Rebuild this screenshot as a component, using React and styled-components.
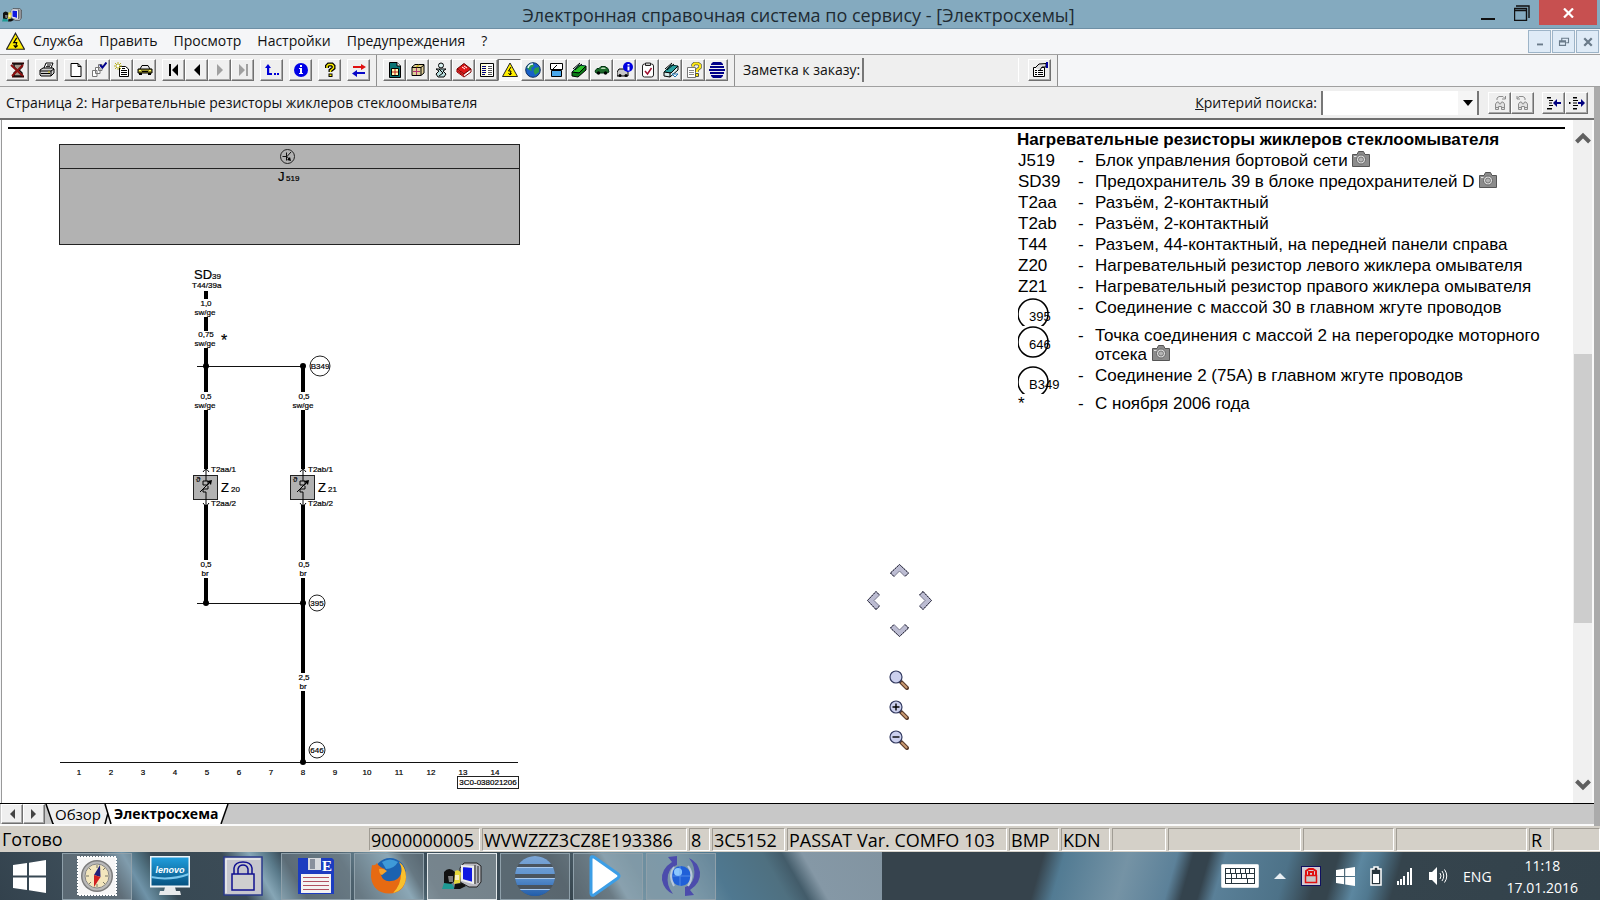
import React from 'react';
import styled, { createGlobalStyle, css } from 'styled-components';

const UI = '"Open Sans", "Noto Sans", sans-serif';
const DOC = '"Liberation Sans", Arial, sans-serif';

const Global = createGlobalStyle`
  * { box-sizing: border-box; }
  body { margin: 0; font-family: ${UI}; font-size: 14px; color: #111; }
  button, input { font: inherit; color: inherit; margin: 0; padding: 0; border-radius: 0; }
  svg { display: block; flex: none; }
`;

/* ---------- shell ---------- */
const Shell = styled.div`
  display: flex;
  flex-direction: column;
  min-height: 100vh;
  background: #f5f6f8;
`;

const TitleBar = styled.header`
  display: flex;
  align-items: flex-start;
  height: 29px;
  background: #84aabf;
  border-bottom: 1px solid #6d8fa5;
`;
const TitleIcon = styled.span`
  width: 24px;
  padding: 8px 0 0 2px;
`;
const TitleText = styled.h1`
  flex: 1;
  margin: 0;
  padding-left: 102px;
  font-size: 18px;
  font-weight: 400;
  line-height: 30px;
  text-align: center;
  color: #1e2b33;
  white-space: nowrap;
`;
const CaptionButton = styled.button`
  display: flex;
  align-items: center;
  justify-content: center;
  width: ${(p) => (p.$close ? 58 : 34)}px;
  height: 25px;
  margin-right: ${(p) => (p.$close ? 3 : 0)}px;
  border: 0;
  background: ${(p) => (p.$close ? '#c75050' : 'transparent')};
`;

const MenuBar = styled.nav`
  display: flex;
  align-items: center;
  height: 26px;
  padding-left: 6px;
  background: #f5f6f8;
  border-bottom: 1px solid #a0a0a0;
`;
const MenuItem = styled.button`
  padding: 0 8px 1px;
  border: 0;
  background: none;
  line-height: 24px;
`;
const MdiButtons = styled.div`
  display: flex;
  gap: 1px;
  margin-left: auto;
  padding-right: 1px;
`;
const MdiButton = styled.button`
  display: flex;
  align-items: center;
  justify-content: center;
  width: 23px;
  height: 23px;
  border: 1px solid #9db4c8;
  background: #dfebf7;
`;

/* ---------- tool bars ---------- */
const ToolRow = styled.div`
  display: flex;
  height: 32px;
  border-bottom: 1px solid #a0a0a0;
`;
const ToolSection = styled.div`
  display: flex;
  align-items: center;
  gap: 6px;
  padding: 0 6px 2px;
  background: #efefef;
  border-right: 1px solid #8f8f8f;
`;
const ButtonGroup = styled.div`
  display: flex;
`;
const raised = css`
  border: 1px solid;
  border-color: #fff #707070 #707070 #fff;
  box-shadow: inset -1px -1px 0 #a8a8a8;
`;
const sunken = css`
  border: 1px solid;
  border-color: #707070 #fff #fff #707070;
  background: #f8f8f8;
`;
const ToolButton = styled.button`
  display: flex;
  align-items: center;
  justify-content: center;
  width: 23px;
  height: 22px;
  background: #efefef;
  ${(p) => (p.$pressed ? sunken : raised)}
`;
const NoteLabel = styled.label`
  margin: 0 -4px 0 2px;
  white-space: nowrap;
`;
const NoteInput = styled.input`
  width: 157px;
  height: 24px;
  margin-right: 3px;
  border: 0;
  border-left: 2px solid #777;
  border-right: 1px solid #fff;
  background: transparent;
`;

const Workspace = styled.div`
  display: flex;
  flex: 1;
  flex-direction: column;
  border-right: 6px solid #ababab;
`;
const PageBar = styled.div`
  display: flex;
  align-items: center;
  height: 33px;
  padding: 0 6px;
  background: #efefef;
  border-bottom: 2px solid #707070;
`;
const PageTitle = styled.h2`
  flex: 1;
  margin: 0;
  font-size: 14px;
  font-weight: 400;
`;
const SearchBox = styled.div`
  display: flex;
  width: 158px;
  height: 24px;
  margin: 0 9px 0 4px;
  border-left: 2px solid #777;
  border-right: 2px solid #777;
`;
const SearchInput = styled.input`
  flex: 1;
  min-width: 0;
  border: 0;
  background: #fff;
`;
const SearchDrop = styled.button`
  display: flex;
  align-items: center;
  justify-content: center;
  width: 19px;
  border: 0;
  background: #f5f5f5;
`;
const SearchGroup = styled(ButtonGroup)`
  margin-left: ${(p) => (p.$spaced ? 8 : 0)}px;
`;

/* ---------- document ---------- */
const Document = styled.main`
  display: flex;
  flex: 1;
  margin-left: 1px;
  border-left: 1px solid #999;
  background: #fff;
`;
const Sheet = styled.div`
  display: flex;
  flex: 1;
  margin: 7px 8px 0 6px;
  border-top: 2px solid #000;
`;
const DiagramPane = styled.section`
  display: flex;
  flex: 1;
  justify-content: space-between;
  padding-right: 79px;
`;
const Controls = styled.div`
  padding-top: 426px;
`;
const PanPad = styled.div`
  display: grid;
  grid-template-columns: repeat(3, 26px);
  grid-template-rows: repeat(3, 30px);
  grid-template-areas: '. up .' 'left . right' '. down .';
`;
const ZoomStack = styled.div`
  display: grid;
  grid-auto-rows: 30px;
  justify-content: center;
  margin-top: 20px;
`;
const PlainButton = styled.button`
  display: flex;
  align-items: center;
  justify-content: center;
  grid-area: ${(p) => p.$area || 'auto'};
  border: 0;
  background: none;
`;
const LegendPane = styled.section`
  width: 548px;
  font-family: ${DOC};
  font-size: 17px;
  line-height: 20px;
  color: #000;
`;
const LegendTitle = styled.h3`
  margin: 0;
  font-size: 17px;
  line-height: 22px;
`;
const LegendTable = styled.table`
  border-collapse: collapse;
`;
const LegendRow = styled.tr`
  height: ${(p) => p.$height || 21}px;
  vertical-align: top;
`;
const Code = styled.th`
  width: 61px;
  padding: 0 0 0 1px;
  font-weight: 400;
  text-align: left;
`;
const Dash = styled.td`
  width: 17px;
  padding: 0;
`;
const Meaning = styled.td`
  padding: 0;
  line-height: ${(p) => (p.$wrap ? 19 : 20)}px;
  svg { display: inline-block; vertical-align: -1px; }
`;

const ScrollBar = styled.div`
  display: flex;
  flex-direction: column;
  width: 21px;
  background: #f0f0f0;
  border-right: 2px solid #fafafa;
`;
const ScrollButton = styled.button`
  display: flex;
  align-items: center;
  justify-content: center;
  height: 36px;
  border: 0;
  background: none;
`;
const ScrollTrack = styled.div`
  display: flex;
  flex: 1;
  flex-direction: column;
  padding-left: 1px;
`;
const ScrollGap = styled.div`
  flex: ${(p) => p.$share};
`;
const ScrollThumb = styled.div`
  flex: 269;
  background: #cdcdcd;
`;

/* ---------- sheet tabs ---------- */
const TabStrip = styled.div`
  display: flex;
  height: 23px;
  padding-left: 1px;
  background: #c8c8c8;
  border-top: 1px solid #000;
  border-bottom: 2px solid #fafafa;
`;
const TabArrow = styled.button`
  display: flex;
  align-items: center;
  justify-content: center;
  width: 22px;
  height: 20px;
  background: #efefef;
  ${raised}
`;
const SheetTab = styled.button`
  height: 20px;
  padding: 0 1px 1px;
  border: 0;
  background: ${(p) => (p.$active ? '#fff' : '#efefef')};
  color: #000;
  font-weight: ${(p) => (p.$active ? 700 : 400)};
  font-size: ${(p) => (p.$active ? 14 : 15)}px;
  line-height: 18px;
`;

/* ---------- status bar ---------- */
const StatusBar = styled.footer`
  display: flex;
  gap: 2px;
  height: 26px;
  padding: 2px 0 1px;
  background: #d4d0c8;
  font-size: 18px;
  line-height: 23px;
  color: #000;
  white-space: nowrap;
`;
const StatusText = styled.span`
  flex: 1;
  padding-left: 2px;
`;
const StatusField = styled.span`
  width: ${(p) => p.$width}px;
  padding-left: 1px;
  border: 1px solid;
  border-color: #a09c94 #fff #fff #a09c94;
  line-height: 22px;
`;

/* ---------- task bar ---------- */
const TaskBar = styled.div`
  display: flex;
  align-items: center;
  height: 48px;
  background:
    linear-gradient(
      60deg,
      #33424d 0, #3f505c 107px, #6f93a8 129px, #50707f 142px, #384954 155px,
      #3b4b56 215px, #86a6b6 239px, #5a7a8a 254px, #3c4e5a 267px, #4d616d 315px,
      #7fa3b5 358px, #4a5f6b 371px, #3c4e5a 384px, #37464f 497px, #50636e 532px,
      #7c9aaa 545px, #6f8f9f 566px, #6a8fa2 601px, #4f7890 635px, #4f7080 683px,
      #435c6a 700px, #8598a6 718px, #8294a1 786px
    ) left / 882px 100% no-repeat,
    linear-gradient(
      106deg,
      #36434c 64.7%, #527b93 66%, #7593a5 70%, #5c8199 73%, #34434d 74%,
      #34434d 75%, #5a8098 76%, #4d7288 80%, #35444d 82%, #35444d 83%,
      #5c87a0 84.5%, #50788f 85.5%, #35444d 87%, #33424b 100%
    );
  color: #fff;
`;
const StartButton = styled.button`
  display: flex;
  align-items: center;
  width: 62px;
  height: 48px;
  padding-left: 13px;
  border: 0;
  background: none;
`;
const TaskList = styled.div`
  display: flex;
  flex: 1;
  gap: 3px;
`;
const TaskButton = styled.button`
  display: flex;
  align-items: center;
  justify-content: center;
  width: 70px;
  height: 47px;
  border: 1px solid ${(p) => (p.$state === 'active' ? '#e2e8eb' : p.$state === 'open' ? '#8fa0aa' : 'transparent')};
  background: ${(p) => (p.$state === 'active' ? 'rgba(200,210,215,.42)' : p.$state === 'open' ? 'rgba(170,180,185,.3)' : 'none')};
`;
const Tray = styled.div`
  display: flex;
  align-items: center;
  gap: 15px;
  padding-right: 22px;
`;
const TrayButton = styled.button`
  display: flex;
  align-items: center;
  border: 0;
  background: none;
  color: #fff;
`;
const Clock = styled.time`
  display: flex;
  flex-direction: column;
  align-items: center;
  line-height: 22px;
  padding-top: 2px;
`;

/* ---------- icons ---------- */
const Pix = ({ children, size = 16 }) => (
  <svg width={size} height={size} viewBox="0 0 16 16" aria-hidden="true">{children}</svg>
);
const k = { fill: 'none', stroke: '#000', strokeWidth: 1 };

const Warning = ({ size = 16 }) => (
  <Pix size={size}>
    <path d="M8 1 L15.5 14.5 H.5 Z" fill="#ffee00" stroke="#222" />
    <path d="M9 5 L6.5 9 H9 L8 13 M6.5 11 L8 13 L9.8 11.4" {...k} />
  </Pix>
);
const AppGlyph = ({ width = 20 }) => (
  <svg width={width} height={width * 0.7} viewBox="0 0 40 28" aria-hidden="true">
    <path d="M18 6 L22 1 H35 L39 4 V20 L35 25 H27 L18 20 Z" fill="#b9b9c0" stroke="#222" />
    <path d="M20 4 L31 5 V21 L20 18 Z" fill="#1018e0" stroke="#eee" strokeWidth="2" />
    <path d="M33 3 V22 M36 4 V21" stroke="#555" strokeWidth="1.5" />
    <path d="M2 10 Q7 4 13 10 L14 18 L9 22 H2 Z" fill="#111" />
    <path d="M6 14 H11 V20 H7 Z" fill="#7d7d7d" />
    <path d="M0 27 L2 21 L10 22 L13 27 Z" fill="#1e9a94" />
    <path d="M13 9 Q17 7 19 11 L18 21 L12 22 Z" fill="#e6d83a" />
    <path d="M13 13 H17 V18 H13 Z" fill="#f7efc0" />
    <path d="M12 27 L13 22 L20 21 L24 24 L18 27 Z" fill="#111" />
  </svg>
);
const Sheetlet = ({ x = 3, y = 1 }) => <path d={`M${x} ${y}.5 h7 l3 3 v10 h-10 z m7 0 v3 h3`} fill="#fff" stroke="#000" />;

const icons = {
  exit: <Pix><path d="M2 1.5 H14 M2 14.5 H14" stroke="#300" strokeWidth="2" /><path d="M4 2 V5 L7 8 L4 11 V14 H12 V11 L9 8 L12 5 V2 Z" fill="#a8988c" stroke="#111" strokeWidth="1.500" /><path d="M1 3 L13 14 M13 3 L2 14" stroke="#8c1010" strokeWidth="2" /></Pix>,
  print: <Pix><path d="M5 6 L7 1 H14 L12 6" fill="#fff" stroke="#000" /><path d="M1 8 L4 6 H14 L15 7 V11 L12 14 H2 L1 13 Z" fill="#d0d0d0" stroke="#000" /><path d="M1 9 H12 V14 M12 9 L15 7 M2 11.5 H11 M8 3 H12 M7 4.7 H11" {...k} /><path d="M9 10 h2" stroke="#d0c000" /></Pix>,
  page: <Pix><Sheetlet /></Pix>,
  copies: <Pix><path d="M1.500 8.500 H6 V14.500 H1.500 Z M4.500 5.500 H9 V11.500 H4.500 Z M7.500 2.500 H11 V8.500 H7.500 Z" fill="#fff" stroke="#777" /><path d="M9 3 L11.500 5.500 L15.500 .5" fill="none" stroke="#00008c" strokeWidth="2" /></Pix>,
  newDoc: <Pix><path d="M5.500 4.500 H11.500 L14.500 7 V14.500 H5.500 Z" fill="#fff" stroke="#000" /><path d="M7 8.500 H13 M7 10.500 H13 M7 12.500 H13 M8 6.500 H11" stroke="#000" /><path d="M4 0 V8 M0 4 H8 M1 1 L7 7 M7 1 L1 7" stroke="#b8b020" /><path d="M3 3 h2 v2 h-2z" fill="#fff" /></Pix>,
  car: <Pix><path d="M3 7 L5 3.500 H11 L13 7" fill="#e8e8e8" stroke="#000" /><path d="M1 7 H15 V11 H1 Z" fill="#98902c" stroke="#000" /><path d="M2 11 h3 v2 h-3z M11 11 h3 v2 h-3z" fill="#000" /><path d="M5 9.500 H11" stroke="#000" /><path d="M2 8.500 h2 M12 8.500 h2" stroke="#ff6" /></Pix>,
  first: <Pix><path d="M3 2 h2 v12 h-2z M12 2 V14 L6 8 Z" fill="#000" /></Pix>,
  prev: <Pix><path d="M11 2 V14 L5 8 Z" fill="#000" /></Pix>,
  next: <Pix><path d="M5 2 V14 L11 8 Z" fill="#a0a0a0" /></Pix>,
  last: <Pix><path d="M11 2 h2 v12 h-2z M4 2 V14 L10 8 Z" fill="#a0a0a0" /></Pix>,
  up: <Pix><path d="M1 6 L4 2 L7 6 H5.200 V11 H8 V13 H3 V6 Z M10 11 h2 v2 h-2z M13 11 h2 v2 h-2z" fill="#0000d8" /></Pix>,
  info: <Pix><circle cx="8" cy="8" r="7" fill="#0000e6" /><path d="M7 3 h2 v2 h-2z M6 6 h3 v5 h1 v1 h-4 v-1 h1 v-4 h-1z" fill="#fff" /></Pix>,
  help: <Pix><path d="M5 6 V4 L6.500 2.500 H10 L11.500 4 V6 L8.500 8.500 V10" fill="none" stroke="#000" strokeWidth="4" /><path d="M5 6 V4 L6.500 2.500 H10 L11.500 4 V6 L8.500 8.500 V10" fill="none" stroke="#fff000" strokeWidth="1.500" /><path d="M6.500 11.500 h4 v3.500 h-4z" fill="#000" /><path d="M7.500 12.500 h2 v1.500 h-2z" fill="#fff000" /></Pix>,
  swap: <Pix><path d="M2 4 H10 V2 L15 5 L10 8 V6 H2 Z" fill="#e01010" /><path d="M14 10 H6 V8 L1 11.500 L6 15 V12 H14 Z" fill="#0808c8" /></Pix>,
  sheetGift: <Pix><path d="M2.500 .5 H10 L13.500 4 V15.500 H2.500 Z" fill="#0a7474" stroke="#000" /><path d="M10 .5 V4 H13.500" fill="#fff" stroke="#000" /><path d="M4.500 6.500 h7 v7 h-7z" fill="#ffffb0" stroke="#000" /><path d="M8 7 v6 M5 10 h6" stroke="#c02020" /></Pix>,
  box: <Pix><path d="M2 5 L5 2.500 H14 V11 L11 13.500 H2 Z" fill="#e0cf98" stroke="#000" /><path d="M2 5.500 H11 V13 M11 5.500 L14 3" {...k} /><path d="M6.500 6 V13 M3 9.500 H10" stroke="#b03070" /><path d="M6.500 5 L9 3" stroke="#c8b020" strokeWidth="1.500" /></Pix>,
  person: <Pix><circle cx="8" cy="3.500" r="2.500" fill="#d8f0f0" stroke="#000" /><path d="M3 7 H13 L10 9 L13 12 L11 15 H5 L3 12 L6 9 Z" fill="#b8dede" stroke="#000" /><path d="M6 7 L10 11 L6 14" {...k} /></Pix>,
  book: <Pix><path d="M1 7 L8 1.500 L15 7 L8 12 Z" fill="#e01818" stroke="#600" /><path d="M1 7 V10 L8 15 L15 10 V7 L8 12 Z" fill="#fff" stroke="#800000" /><path d="M1 8.500 L8 13.500" stroke="#c01010" strokeWidth="2" /><path d="M6 5 l3 2 M8 4 l3 2" stroke="#fff" /></Pix>,
  columns: <Pix><path d="M1.500 1.500 h13 v13 h-13z" fill="#ffffd8" stroke="#000" /><path d="M8 2 h6 v12 h-6z" fill="#fff" /><path d="M3 4.500 h4 M3 6.500 h4 M3 8.500 h4 M3 10.500 h4 M3 12.500 h3" stroke="#000080" /><path d="M9 4.500 h4 M9 6.500 h4 M9 8.500 h4 M9 10.500 h4 M9 12.500 h4" stroke="#555" /></Pix>,
  warning: <Warning />,
  globe: <Pix><circle cx="8" cy="8" r="7.300" fill="#1860c8" stroke="#103060" /><path d="M3 3 L8 1.500 L9 4 L6 6 L7 9 L4 8 L2 6 Z M10 6 L14 5 L14 10 L10 13 L8.500 9 Z" fill="#2a9a4a" /><path d="M3 6 Q4 2 8 2" fill="none" stroke="#e8f4ff" strokeWidth="1.500" /></Pix>,
  floppyHalf: <Pix><path d="M2.500 1.500 h12 v6 h-12z" fill="#fff" stroke="#000" /><path d="M3.500 8.500 h10 v6 h-10z" fill="#4aa8ec" stroke="#000" /><path d="M5 7 l4 -4" {...k} /></Pix>,
  greenBook: <Pix><path d="M1 10 L8 3 L15 4 L8 11 Z" fill="#28c028" stroke="#033" /><path d="M1 10 V14 L7 15 L15 8 V4 L8 11 Z" fill="#0a7a18" stroke="#000" /><path d="M2 7 L9 1 M4 8 L11 2" {...k} /></Pix>,
  greenCar: <Pix><path d="M1 9 L3 6.500 H5 L7 4.500 H11 L14 6.500 L15 10 L13 11 H2 Z" fill="#1c6a2a" stroke="#031" /><path d="M6.500 7 l1.500 -1.500 h2.500 l1.500 1.500 z" fill="#b8d8b8" /><circle cx="4.500" cy="11" r="1.700" /><circle cx="11.500" cy="11" r="1.700" /></Pix>,
  carInfo: <Pix><path d="M0 10 L2 7 H9 L11 10 V14 H0 Z" fill="#c8c8c8" stroke="#000" /><circle cx="3" cy="13.500" r="1.500" /><circle cx="9" cy="13.500" r="1.500" /><circle cx="11" cy="5" r="5" fill="#0000e0" /><path d="M10.500 2 h2 v1.500 h-2z M10.500 4.500 h2 v4 h-2z" fill="#fff" /></Pix>,
  clipboard: <Pix><rect x="2.500" y="2" width="11" height="13" rx="2" fill="#fff" stroke="#222" /><path d="M5.500 1 h5 v2.500 h-5z" fill="#ccc" stroke="#222" /><path d="M5 9 L7.500 12 L11.500 6" fill="none" stroke="#a01030" strokeWidth="1.500" /></Pix>,
  tealBook: <Pix><path d="M1 10 L8 3 L15 4 L8 11 Z" fill="#2aa0a0" stroke="#033" /><path d="M1 10 V14 L7 15 L15 8 V4 L8 11 Z" fill="#d8ecec" stroke="#000" /><path d="M2 7 L9 1 M4 8 L11 2 M7 11 V15" {...k} /><path d="M9 12 H15 L12 15 Z" fill="#fff" stroke="#1870b0" /></Pix>,
  docHelp: <Pix><path d="M1.500 5.500 h8 v10 h-8z" fill="#fff" stroke="#777" /><path d="M3 8.500 h5 M3 10.500 h5 M3 12.500 h5" stroke="#888" /><path d="M7 4.500 V3 L8.500 1.500 H12 L14 3 V5.500 L11 8 V10" fill="none" stroke="#554" strokeWidth="3.400" /><path d="M7 4.500 V3 L8.500 1.500 H12 L14 3 V5.500 L11 8 V10" fill="none" stroke="#ffe810" strokeWidth="2" /><path d="M9.500 11.500 h3 v3 h-3z" fill="#ffe810" stroke="#554" /></Pix>,
  stripes: <Pix><path d="M4 0 h8 l2 2 v1 h-12 v-1z M1 4 h14 v2 h-14z M0 7 h16 v2 h-16z M1 10 h14 v2 h-14z M2 13 h12 v1 l-2 2 h-8 l-2 -2z" fill="#000088" /></Pix>,
  properties: <Pix><path d="M1.500 5.500 h11 v9 h-11z" fill="#fff" stroke="#000" /><path d="M3 8.500 h2 M6 8.500 h5 M3 10.500 h2 M6 10.500 h5 M3 12.500 h2 M6 12.500 h5" stroke="#000" /><path d="M3 6 L7 2 L14 1.500 V5 H10 L8 8" fill="#ddd" stroke="#000" /><path d="M14 0 h2 v6 h-2z" fill="#0000a0" /></Pix>,
  indentLeft: <Pix><path d="M1 2 h4 v1.500 h-4z M3 5 h4 v1 h-4z M3 7.500 h3 v1 h-3z M3 10 h4 v1 h-4z M1 13 h5 v1.500 h-5z" fill="#000" /><path d="M7 8 L11 4 V7 H15 V9 H11 V12 Z" fill="#000080" /></Pix>,
  indentRight: <Pix><path d="M4 2 h4 v1.500 h-4z M4 5 h5 v1 h-5z M4 7.500 h4 v1 h-4z M4 10 h5 v1 h-5z M4 13 h4 v1.500 h-4z M0 7 h1.500 v2 h-1.500z" fill="#000" /><path d="M16 8 L12 4 V7 H9 V9 H12 V12 Z" fill="#000080" /></Pix>,
};

const Binoculars = ({ back }) => (
  <Pix>
    <g fill="#e2e2e2" stroke="#8c8c8c">
      <path d="M3.500 9 L5 7 H6.500 L7.500 9 H8.500 L9.500 7 H11 L12.500 9 V14.500 H9.500 V11.500 H6.500 V14.500 H3.500 Z" />
      <path d="M4 12.500 h2 M10 12.500 h2" />
      <path d={back ? 'M10 5 V3 L8 1.500 H4 L2.500 3.500 M2 1 V4 H5' : 'M5 5 V3 L7 1.500 H11 L13 3.500 M13.500 1 V4 H10'} fill="none" />
    </g>
  </Pix>
);

const Chevron = ({ turn = 0 }) => (
  <svg width="19" height="19" viewBox="0 0 19 19" aria-hidden="true">
    <g transform={`rotate(${turn} 9.500 9.500)`}>
      <path d="M9.500 3.500 L18.500 12 L15 15.500 L9.500 10 L4 15.500 L.5 12 Z" fill="#bcbcd2" stroke="#77778c" />
      <path d="M.5 12 L9.500 3.500 L18.500 12 L15 15.500 M.5 12 L4 15.500" fill="none" stroke="#222233" strokeDasharray="2 1" />
    </g>
  </svg>
);
const Magnifier = ({ sign }) => (
  <svg width="20" height="20" viewBox="0 0 20 20" aria-hidden="true">
    <path d="M12 12 L18 18" stroke="#55382a" strokeWidth="4" strokeLinecap="round" />
    <path d="M13 13 L17.500 17.500" stroke="#c89a72" strokeWidth="2" strokeLinecap="round" />
    <circle cx="7" cy="7" r="6" fill="#ccd0ee" stroke="#333a60" strokeWidth="1.200" />
    {sign && <path d={sign === '+' ? 'M7 3.500 V10.500 M3.500 7 H10.500' : 'M3.500 7 H10.500'} stroke="#000" strokeWidth="1.400" />}
  </svg>
);
const Camera = () => (
  <svg width="18" height="16" viewBox="0 0 18 16" role="img" aria-label="Фото">
    <path d="M.5 3.500 H5 L6.500 .5 H11.500 L13 3.500 H17.500 V15.500 H.5 Z" fill="#8c8c8c" stroke="#555" />
    <circle cx="9" cy="8.500" r="4.500" fill="#ddd" stroke="#666" />
    <circle cx="9" cy="8.500" r="2.500" fill="#b4b4b4" stroke="#777" />
    <path d="M2 5.500 h2.500" stroke="#e4e4e4" />
  </svg>
);
const ScrollArrow = ({ down }) => (
  <svg width="16" height="12" viewBox="0 0 16 12" aria-hidden="true">
    <path d={down ? 'M1.500 2 L8 8.500 L14.500 2' : 'M1.500 10 L8 3.500 L14.500 10'} fill="none" stroke="#606060" strokeWidth="4" />
  </svg>
);
const Triangle = ({ d, w = 10, h = 10, fill = '#444' }) => (
  <svg width={w} height={h} viewBox={`0 0 ${w} ${h}`} aria-hidden="true"><path d={d} fill={fill} /></svg>
);
const WinLogo = ({ size }) => (
  <svg width={size} height={size} viewBox="0 0 33 33" aria-hidden="true">
    <path d="M0 5 L14 3 V15.500 H0 Z M16 2.700 L33 0 V15.500 H16 Z M0 17.500 H14 V30 L0 28 Z M16 17.500 H33 V33 L16 30.300 Z" fill="#fff" />
  </svg>
);

/* ---------- wiring diagram ---------- */
const DiagramSvg = styled.svg`
  font-family: ${DOC};
  font-size: 8px;
  fill: #000;
  text {
    stroke: #000;
    stroke-width: 0.2;
  }
`;
const WireLabel = ({ x, y, size, color }) => (
  <g textAnchor="middle">
    <text x={x + 1} y={y}>{size}</text>
    <text x={x} y={y + 9}>{color}</text>
  </g>
);
const Node = ({ x, y, r, name }) => (
  <g textAnchor="middle">
    <circle cx={x} cy={y} r={r} fill="none" stroke="#222" />
    <text x={x} y={y + 3}>{name}</text>
  </g>
);
const Heater = ({ x, pin, index }) => (
  <g>
    <path d={`M${x - 3} 472 q3 -5 6 0 M${x - 3} 503 q3 5 6 0`} fill="none" stroke="#000" />
    <rect x={x - 12.5} y="475.500" width="24" height="24" fill="#b2b2b2" stroke="#222" />
    <path d={`M${x} 469 V481 M${x} 492 V506 M${x - 3} 481 h5 v4 h-5 z M${x} 492 h-3 v-3 h5 v-3`} fill="none" stroke="#000" />
    <path d={`M${x - 6} 492 L${x + 4} 482`} stroke="#000" />
    <path d={`M${x + 6} 480 l-1 5 l-4 -4 z`} />
    <text x={x - 10} y="482">ϑ</text>
    <text x={x + 5} y="472">{pin}/1</text>
    <text x={x + 5} y="506">{pin}/2</text>
    <text x={x + 15} y="492" fontSize="13">Z</text>
    <text x={x + 25} y="492">{index}</text>
  </g>
);
const Diagram = () => (
  <DiagramSvg width="540" height="670" viewBox="8 129 540 670" role="img" aria-label="Электросхема">
    <rect x="59.500" y="144.500" width="460" height="100" fill="#b2b2b2" stroke="#222" />
    <path d="M59 168.500 H520" stroke="#222" />
    <circle cx="287.500" cy="156.500" r="7" fill="none" stroke="#222" />
    <path d="M282.500 156.500 H287 M286.500 152.500 V160.500 M287 156.500 L291 152 M287 156.500 L289 159" fill="none" stroke="#111" />
    <path d="M291 161 l-4 -1 l3 -3 z" />
    <text x="278" y="181" fontSize="13">J</text>
    <text x="286" y="181">519</text>
    <text x="194" y="279" fontSize="13">SD</text>
    <text x="212" y="279">39</text>
    <text x="192" y="288">T44/39a</text>
    <path
      d="M206 291 V299 M206 317 V331 M206 348 V392 M206 410 V469 M206 505 V560 M206 578 V603
         M303 366 V392 M303 410 V469 M303 505 V560 M303 578 V673 M303 691 V762"
      stroke="#000" strokeWidth="4"
    />
    <path d="M197 366.500 H303 M197 603.500 H303 M60 762.500 H518" stroke="#111" />
    {[[206, 366], [303, 366], [206, 603], [303, 603], [303, 762]].map(([x, y]) => <circle key={`${x}-${y}`} cx={x} cy={y} r="3" />)}
    <WireLabel x={205} y={306} size="1,0" color="sw/ge" />
    <WireLabel x={205} y={337} size="0,75" color="sw/ge" />
    <WireLabel x={205} y={399} size="0,5" color="sw/ge" />
    <WireLabel x={303} y={399} size="0,5" color="sw/ge" />
    <WireLabel x={205} y={567} size="0,5" color="br" />
    <WireLabel x={303} y={567} size="0,5" color="br" />
    <WireLabel x={303} y={680} size="2,5" color="br" />
    <text x="221" y="346" fontSize="16">*</text>
    <Node x={320} y={366} r={10} name="B349" />
    <Node x={317} y={603} r={8} name="395" />
    <Node x={317} y={750} r={8} name="646" />
    <Heater x={206} pin="T2aa" index="20" />
    <Heater x={303} pin="T2ab" index="21" />
    <g textAnchor="middle">
      {Array.from({ length: 14 }, (_, i) => <text key={i} x={79 + i * 32} y="775">{i + 1}</text>)}
    </g>
    <rect x="457.500" y="776.500" width="61" height="12" fill="#fff" stroke="#222" />
    <text x="488" y="785" textAnchor="middle">3C0-038021206</text>
  </DiagramSvg>
);

/* ---------- legend ---------- */
const CircleCode = ({ name, full }) => (
  <svg width="52" height={full ? 32 : 28} viewBox={`1 0 52 ${full ? 32 : 28}`}>
    <circle cx="16" cy="16" r="15" fill="none" stroke="#000" strokeWidth="1.500" />
    <text x="12" y="23" fontSize="13" fontFamily={DOC}>{name}</text>
  </svg>
);
const legend = [
  { code: 'J519', text: 'Блок управления бортовой сети', photo: true },
  { code: 'SD39', text: 'Предохранитель 39 в блоке предохранителей D', photo: true },
  { code: 'T2aa', text: 'Разъём, 2-контактный' },
  { code: 'T2ab', text: 'Разъём, 2-контактный' },
  { code: 'T44', text: 'Разъем, 44-контактный, на передней панели справа' },
  { code: 'Z20', text: 'Нагревательный резистор левого жиклера омывателя' },
  { code: 'Z21', text: 'Нагревательный резистор правого жиклера омывателя' },
  { code: '395', circle: true, height: 28, text: 'Соединение с массой 30 в главном жгуте проводов' },
  { code: '646', circle: true, full: true, height: 40, text: 'Точка соединения с массой 2 на перегородке моторного отсека', photo: true },
  { code: 'B349', circle: true, height: 28, text: 'Соединение 2 (75A) в главном жгуте проводов' },
  { code: '*', text: 'С ноября 2006 года' },
];

const T = ({ name, icon, pressed }) => (
  <ToolButton type="button" aria-label={name} $pressed={pressed}>{icon || icons[name]}</ToolButton>
);
const Group = ({ names }) => <ButtonGroup>{names.map((n) => <T key={n} name={n} pressed={n === 'warning'} />)}</ButtonGroup>;

/* ---------- task bar pictures ---------- */
const Compass = () => (
  <svg width="40" height="40" viewBox="0 0 40 40" aria-hidden="true">
    <rect x="1" y="1" width="38" height="38" fill="#f6f6f6" stroke="#fff" strokeWidth="2" strokeDasharray="2 1" />
    <circle cx="20" cy="20" r="16" fill="#7c7c7c" />
    <circle cx="20" cy="20" r="14.500" fill="#b9b9b9" />
    <circle cx="20" cy="20" r="12" fill="#f3e6bd" stroke="#888" />
    <path d="M20 9 v3 M20 28 v3 M9 20 h3 M28 20 h3 M12 12 l2 2 M28 12 l-2 2 M12 28 l2 -2 M28 28 l-2 -2" stroke="#776" />
    <path d="M23 9 L23.500 21 L17 19 Z" fill="#20207a" />
    <path d="M17 31 L17 19 L23.500 21 Z" fill="#d02020" />
  </svg>
);
const Monitor = () => (
  <svg width="40" height="40" viewBox="0 0 40 40" aria-hidden="true">
    <defs><linearGradient id="scr" x1="0" y1="0" x2="0" y2="1"><stop offset="0" stopColor="#21a0e0" /><stop offset="1" stopColor="#06507e" /></linearGradient></defs>
    <rect x=".5" y=".5" width="39" height="30" fill="url(#scr)" stroke="#eef4f8" strokeWidth="2" />
    <path d="M1 21 Q20 25 39 18" fill="none" stroke="#7cc8ee" strokeWidth="2" />
    <path d="M15 31 h10 l1 4 h4 l1 4 h-22 l1 -4 h4 z" fill="#e8eaec" />
    <text x="20" y="17" fontSize="9" fontWeight="700" fontStyle="italic" textAnchor="middle" fill="#fff" fontFamily={DOC}>lenovo</text>
  </svg>
);
const Lock = () => (
  <svg width="40" height="40" viewBox="0 0 40 40" aria-hidden="true">
    <rect x="1" y="1" width="38" height="38" fill="#c6c6ce" stroke="#2a3a8a" strokeWidth="1.500" />
    <path d="M3 37 V3 H37" fill="none" stroke="#fff" />
    <rect x="9" y="18" width="22" height="16" fill="#cfcfcf" stroke="#101090" strokeWidth="1.500" />
    <path d="M11 18 V12 Q12 6 20 6 Q28 6 29 12 V18 M15 18 V13 Q16 9 20 9 Q24 9 25 13 V18" fill="none" stroke="#101090" strokeWidth="1.500" />
  </svg>
);
const Floppy = () => (
  <svg width="38" height="38" viewBox="0 0 38 38" aria-hidden="true">
    <path d="M1 1 H35 L37 3 V37 H1 Z" fill="#1c3cc0" />
    <path d="M11 1 H24 V13 H11 Z" fill="#d8dade" />
    <path d="M13 2 h5 v10 h-5z" fill="#888f9c" />
    <text x="25" y="14" fontSize="15" fontWeight="700" fill="#fff" fontFamily='"Liberation Serif", serif'>E</text>
    <path d="M4 17 H34 V36 H4 Z" fill="#f4f2f2" />
    <path d="M6 20.500 H32 M6 24.500 H32 M6 28.500 H32 M6 32.500 H32" stroke="#b05060" />
  </svg>
);
const Firefox = () => (
  <svg width="38" height="38" viewBox="0 0 38 38" aria-hidden="true">
    <circle cx="20" cy="17" r="16" fill="#1c62b0" />
    <path d="M12 5 Q20 0 28 5 Q24 12 16 12 Z" fill="#3f9ad8" />
    <path d="M2 8 Q5 9 7 6 Q9 10 15 12 Q14 16 11 18 Q13 25 21 24 Q28 24 31 17 Q33 11 29 5 Q36 10 36 20 Q35 36 19 36.500 Q3 36 1 20 Q1 13 2 8 Z" fill="#e66a12" />
    <path d="M31 17 Q33 11 29 5 Q36 10 36 20 Q35 33 23 36 Q31 28 31 17 Z" fill="#f9c02c" />
    <path d="M9 12 Q13 11 17 14 L12 18 Q9 17 9 12 Z" fill="#f7a32a" />
  </svg>
);
const Globe = () => (
  <svg width="42" height="42" viewBox="0 0 42 42" aria-hidden="true">
    <defs>
      <linearGradient id="gl" gradientUnits="userSpaceOnUse" x1="0" y1="0" x2="0" y2="42"><stop offset="0" stopColor="#7ea6d4" /><stop offset=".5" stopColor="#5f94d0" /><stop offset="1" stopColor="#1e5aa8" /></linearGradient>
      <clipPath id="gc"><circle cx="21" cy="21" r="20" /></clipPath>
    </defs>
    <g clipPath="url(#gc)">
      <rect width="42" height="42" fill="#4a545e" />
      <path d="M0 1 H42 V9 H0 Z M0 12 H42 V19 H0 Z M0 23 H42 V30 H0 Z M0 34 H42 V42 H0 Z" fill="url(#gl)" />
      <path d="M0 12.500 H42 M0 23.500 H42 M0 34.500 H42" stroke="#a8c8ec" />
    </g>
  </svg>
);
const Play = () => (
  <svg width="40" height="42" viewBox="0 0 40 42" aria-hidden="true">
    <path d="M3 3 Q3 1 6 2 L30 19 Q32 21 30 23 L6 40 Q3 41 3 38 Z" fill="#fff" stroke="#3c9ee6" strokeWidth="3" />
  </svg>
);
const Sync = () => (
  <svg width="42" height="42" viewBox="0 0 42 42" aria-hidden="true">
    <circle cx="21" cy="21" r="10" fill="#2060d8" />
    <circle cx="18" cy="17" r="4" fill="#8cc8ff" />
    <path d="M20 11 v20 M12 21 h18" stroke="#70a8f0" opacity=".6" />
    <path d="M12 7 Q1 14 2 25 Q4 35 13 39 Q6 30 8 20 Q10 12 17 10 V1 L8 2 Z" fill="#4c4cac" />
    <path d="M30 35 Q41 28 40 17 Q38 7 29 3 Q36 12 34 22 Q32 30 25 32 V41 L34 40 Z" fill="#4c4cac" />
    <path d="M14 12 Q8 20 14 31 M28 11 Q35 20 28 31" fill="none" stroke="#b8c8dc" strokeWidth="2" />
  </svg>
);
const Keyboard = () => (
  <svg width="38" height="24" viewBox="0 0 38 24" aria-hidden="true">
    <rect x=".5" y=".5" width="37" height="23" rx="1" fill="#fff" stroke="#dde4e8" />
    <rect x="4" y="4" width="30" height="16" fill="#26343c" />
    <path d="M5 5h4v4h-4z M10 5h4v4h-4z M15 5h4v4h-4z M20 5h4v4h-4z M25 5h3v4h-3z M29 5h4v4h-4z M5 10h5v4h-5z M11 10h4v4h-4z M16 10h4v4h-4z M21 10h4v4h-4z M26 10h7v4h-7z M5 15h5v4h-5z M11 15h15v4h-15z M27 15h6v4h-6z" fill="#fff" />
  </svg>
);

const tasks = [
  ['Компас', 'open', <Compass />], ['Lenovo', 'idle', <Monitor />], ['Замок', 'idle', <Lock />],
  ['Дискета', 'open', <Floppy />], ['Firefox', 'open', <Firefox />], ['Электросхемы', 'active', <AppGlyph width={40} />],
  ['Глобус', 'open', <Globe />], ['Плеер', 'open', <Play />], ['Синхронизация', 'open', <Sync />],
];
const fields = [
  ['9000000005', 111], ['WVWZZZ3CZ8E193386', 205], ['8', 21], ['3C5152', 73], ['PASSAT Var. COMFO 103', 220],
  ['BMP', 50], ['KDN', 49], ['', 54], ['', 133], ['', 91], ['', 131], ['R', 22], ['', 47],
];

export default function App() {
  return (
    <Shell>
      <Global />
      <TitleBar>
        <TitleIcon><AppGlyph /></TitleIcon>
        <TitleText>Электронная справочная система по сервису - [Электросхемы]</TitleText>
        <CaptionButton type="button" aria-label="Свернуть"><svg width="14" height="20" viewBox="0 0 14 20"><path d="M0 15 h14 v2 h-14z" fill="#111" /></svg></CaptionButton>
        <CaptionButton type="button" aria-label="Развернуть"><svg width="16" height="16" viewBox="0 0 16 16"><path d="M.5 3.500 h12 v12 h-12z M.5 5.500 h12 M2 1 H15 V13" fill="none" stroke="#111" strokeWidth="1.400" /></svg></CaptionButton>
        <CaptionButton type="button" aria-label="Закрыть" $close><svg width="11" height="10" viewBox="0 0 11 10"><path d="M1 .5 L10 9.500 M10 .5 L1 9.500" stroke="#fff" strokeWidth="2.200" /></svg></CaptionButton>
      </TitleBar>

      <MenuBar>
        <Warning size={19} />
        {['Служба', 'Править', 'Просмотр', 'Настройки', 'Предупреждения', '?'].map((m) => <MenuItem type="button" key={m}>{m}</MenuItem>)}
        <MdiButtons>
          <MdiButton type="button" aria-label="Свернуть окно"><Pix size={12}><path d="M4 10 h8 v2.500 h-8z" fill="#6a7b8a" /></Pix></MdiButton>
          <MdiButton type="button" aria-label="Восстановить окно"><Pix size={12}><path d="M2 6.500 h8 v6 h-8z M5 6 V3 h9 v6 h-3 M2 8 h8" fill="none" stroke="#6a7b8a" strokeWidth="1.500" /></Pix></MdiButton>
          <MdiButton type="button" aria-label="Закрыть окно"><Pix size={12}><path d="M3 3 L13 13 M13 3 L3 13" stroke="#6a7b8a" strokeWidth="3" /></Pix></MdiButton>
        </MdiButtons>
      </MenuBar>

      <ToolRow>
        <ToolSection>
          <Group names={['exit']} />
          <Group names={['print']} />
          <Group names={['page', 'copies', 'newDoc', 'car']} />
          <Group names={['first', 'prev', 'next', 'last']} />
          <Group names={['up']} />
          <Group names={['info']} />
          <Group names={['help']} />
          <Group names={['swap']} />
        </ToolSection>
        <ToolSection>
          <Group names={['sheetGift', 'box', 'person', 'book', 'columns', 'warning', 'globe', 'floppyHalf', 'greenBook', 'greenCar', 'carInfo', 'clipboard', 'tealBook', 'docHelp', 'stripes']} />
        </ToolSection>
        <ToolSection>
          <NoteLabel htmlFor="note">Заметка к заказу:</NoteLabel>
          <NoteInput id="note" />
          <T name="properties" />
        </ToolSection>
      </ToolRow>

      <Workspace>
        <PageBar>
          <PageTitle>Страница 2: Нагревательные резисторы жиклеров стеклоомывателя</PageTitle>
          <label htmlFor="criterion"><u>К</u>ритерий поиска:</label>
          <SearchBox>
            <SearchInput id="criterion" />
            <SearchDrop type="button" aria-label="Список"><Triangle w={10} h={6} d="M0 0 H10 L5 6 Z" fill="#000" /></SearchDrop>
          </SearchBox>
          <SearchGroup>
            <T name="Найти далее" icon={<Binoculars />} />
            <T name="Найти ранее" icon={<Binoculars back />} />
          </SearchGroup>
          <SearchGroup $spaced>
            <T name="indentLeft" />
            <T name="indentRight" />
          </SearchGroup>
        </PageBar>

        <Document>
          <Sheet>
            <DiagramPane>
              <Diagram />
              <Controls>
                <PanPad>
                  <PlainButton type="button" aria-label="Вверх" $area="up"><Chevron /></PlainButton>
                  <PlainButton type="button" aria-label="Влево" $area="left"><Chevron turn={-90} /></PlainButton>
                  <PlainButton type="button" aria-label="Вправо" $area="right"><Chevron turn={90} /></PlainButton>
                  <PlainButton type="button" aria-label="Вниз" $area="down"><Chevron turn={180} /></PlainButton>
                </PanPad>
                <ZoomStack>
                  <PlainButton type="button" aria-label="Масштаб"><Magnifier /></PlainButton>
                  <PlainButton type="button" aria-label="Увеличить"><Magnifier sign="+" /></PlainButton>
                  <PlainButton type="button" aria-label="Уменьшить"><Magnifier sign="-" /></PlainButton>
                </ZoomStack>
              </Controls>
            </DiagramPane>
            <LegendPane>
              <LegendTitle>Нагревательные резисторы жиклеров стеклоомывателя</LegendTitle>
              <LegendTable>
                <tbody>
                  {legend.map((r) => (
                    <LegendRow key={r.code} $height={r.height}>
                      <Code scope="row">{r.circle ? <CircleCode name={r.code} full={r.full} /> : r.code}</Code>
                      <Dash>-</Dash>
                      <Meaning $wrap={r.full}>{r.text}{r.photo && <> <Camera /></>}</Meaning>
                    </LegendRow>
                  ))}
                </tbody>
              </LegendTable>
            </LegendPane>
          </Sheet>
          <ScrollBar>
            <ScrollButton type="button" aria-label="Прокрутить вверх"><ScrollArrow /></ScrollButton>
            <ScrollTrack>
              <ScrollGap $share={198} />
              <ScrollThumb />
              <ScrollGap $share={144} />
            </ScrollTrack>
            <ScrollButton type="button" aria-label="Прокрутить вниз"><ScrollArrow down /></ScrollButton>
          </ScrollBar>
        </Document>

        <TabStrip>
          <TabArrow type="button" aria-label="Предыдущий лист"><Triangle w={6} h={10} d="M6 0 V10 L1 5 Z" /></TabArrow>
          <TabArrow type="button" aria-label="Следующий лист"><Triangle w={6} h={10} d="M0 0 V10 L5 5 Z" /></TabArrow>
          <svg width="9" height="20" viewBox="0 0 9 20"><path d="M1 0 H9 V20 H8 Z" fill="#efefef" /><path d="M1 0 L8 20 H9" fill="none" stroke="#000" strokeWidth="1.500" /></svg>
          <SheetTab type="button">Обзор</SheetTab>
          <svg width="11" height="20" viewBox="0 0 11 20"><path d="M0 0 H11 V20 H0 Z" fill="#efefef" /><path d="M4 0 H11 V20 H9 Z" fill="#fff" /><path d="M3 0 L9 20 M6 9 L3 20" fill="none" stroke="#000" strokeWidth="1.500" /></svg>
          <SheetTab type="button" $active>Электросхема</SheetTab>
          <svg width="10" height="20" viewBox="0 0 10 20"><path d="M0 0 H9 L2 20 H0 Z" fill="#fff" /><path d="M9 0 L2 20" stroke="#000" strokeWidth="1.500" /></svg>
        </TabStrip>
      </Workspace>

      <StatusBar>
        <StatusText>Готово</StatusText>
        {fields.map(([text, width], i) => <StatusField key={i} $width={width}>{text}</StatusField>)}
      </StatusBar>

      <TaskBar>
        <StartButton type="button" aria-label="Пуск"><WinLogo size={33} /></StartButton>
        <TaskList>
          {tasks.map(([name, state, icon]) => <TaskButton type="button" key={name} aria-label={name} $state={state}>{icon}</TaskButton>)}
        </TaskList>
        <Tray>
          <TrayButton type="button" aria-label="Клавиатура"><Keyboard /></TrayButton>
          <TrayButton type="button" aria-label="Скрытые значки"><Triangle w={12} h={6} d="M6 0 L12 6 H0 Z" fill="#e8eef2" /></TrayButton>
          <TrayButton type="button" aria-label="Защита">
            <svg width="20" height="20" viewBox="0 0 20 20"><rect x=".5" y=".5" width="19" height="19" fill="#d4ccd4" stroke="#101060" /><path d="M5 9 V5 L8 3 H12 L15 5 V9 M8 9 V6 H12 V9" fill="none" stroke="#e01010" strokeWidth="2" /><path d="M4.500 9.500 h11 v7 h-11z" fill="#c8c8c8" stroke="#e01010" strokeWidth="1.500" /></svg>
          </TrayButton>
          <TrayButton type="button" aria-label="Windows"><WinLogo size={19} /></TrayButton>
          <TrayButton type="button" aria-label="Батарея">
            <svg width="12" height="20" viewBox="0 0 12 20"><path d="M4 1 h4 v2 h3 v16 h-10 v-16 h3z" fill="#26343c" stroke="#fff" strokeWidth="1.500" /><path d="M3 8 h6 v9 h-6z" fill="#fff" /></svg>
          </TrayButton>
          <TrayButton type="button" aria-label="Сеть">
            <svg width="16" height="18" viewBox="0 0 16 18"><path d="M0 14h2v4h-2z M3 12h2v6h-2z M6 9h2v9h-2z M10 5h2v13h-2z M13 1h2v17h-2z" fill="#fff" /></svg>
          </TrayButton>
          <TrayButton type="button" aria-label="Громкость">
            <svg width="20" height="20" viewBox="0 0 20 20"><path d="M1 6 H4 L9 1 V19 L4 14 H1 Z" fill="#fff" /><path d="M12 7 Q14 10 12 13 M14 5 Q17.500 10 14 15 M16.500 3.500 Q21 10 16.500 16.500" fill="none" stroke="#fff" /></svg>
          </TrayButton>
          <TrayButton type="button">ENG</TrayButton>
          <Clock dateTime="2016-01-17T11:18"><span>11:18</span><span>17.01.2016</span></Clock>
        </Tray>
      </TaskBar>
    </Shell>
  );
}
